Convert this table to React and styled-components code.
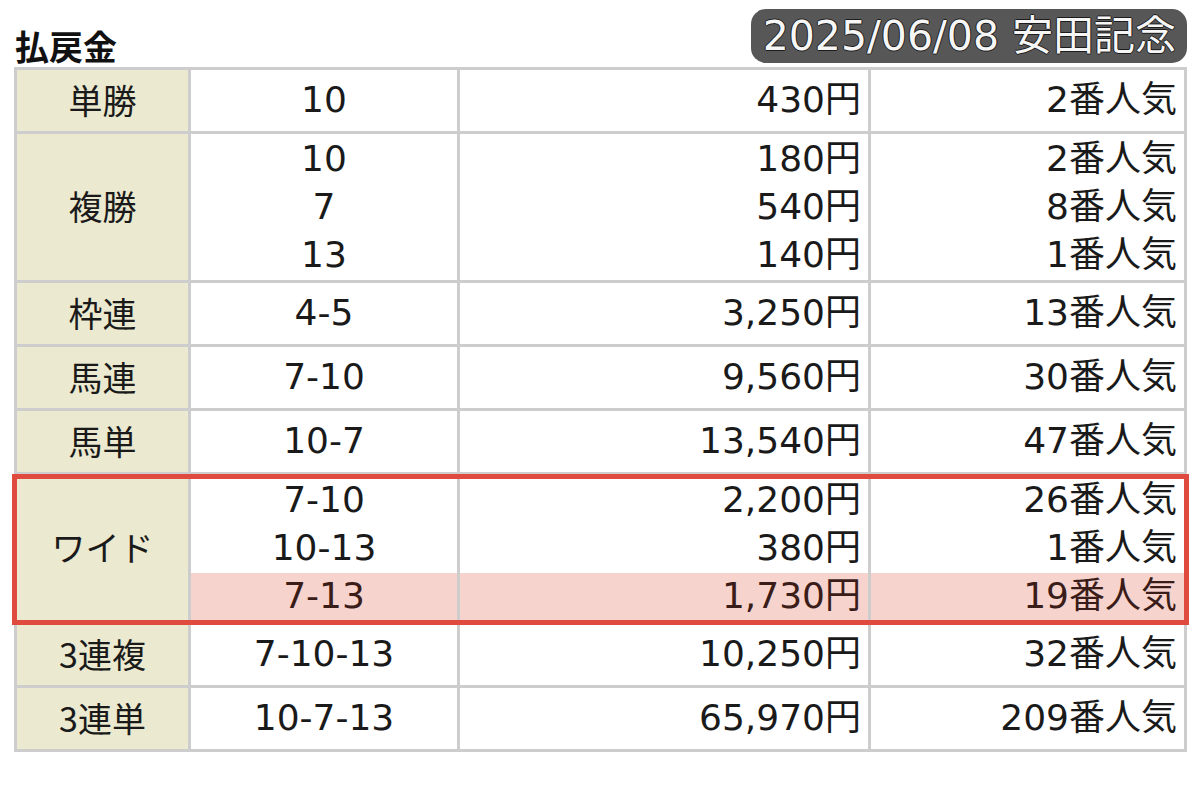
import React from 'react'
import styled, { createGlobalStyle } from 'styled-components'

const GlobalStyle = createGlobalStyle`
  html, body {
    margin: 0;
    padding: 0;
    background: #ffffff;
  }
  body {
    font-family: "DejaVu Sans", "Noto Sans CJK JP", sans-serif;
    color: #1a1a1a;
  }
`

const payouts = [
  { type: '単勝', lines: [['10', '430円', '2番人気']] },
  {
    type: '複勝',
    lines: [
      ['10', '180円', '2番人気'],
      ['7', '540円', '8番人気'],
      ['13', '140円', '1番人気'],
    ],
  },
  { type: '枠連', lines: [['4-5', '3,250円', '13番人気']] },
  { type: '馬連', lines: [['7-10', '9,560円', '30番人気']] },
  { type: '馬単', lines: [['10-7', '13,540円', '47番人気']] },
  {
    type: 'ワイド',
    marked: true,
    highlight: 2,
    lines: [
      ['7-10', '2,200円', '26番人気'],
      ['10-13', '380円', '1番人気'],
      ['7-13', '1,730円', '19番人気'],
    ],
  },
  { type: '3連複', lines: [['7-10-13', '10,250円', '32番人気']] },
  { type: '3連単', lines: [['10-7-13', '65,970円', '209番人気']] },
]

const Page = styled.main`
  width: 1200px;
  height: 800px;
  box-sizing: border-box;
  padding: 9px 13px 0 14px;
`

const Header = styled.header`
  display: flex;
  justify-content: space-between;
  align-items: flex-end;
  margin-bottom: 4px;
`

const Title = styled.h1`
  margin: 0 0 0 1px;
  font-family: "Noto Sans CJK JP", sans-serif;
  font-size: 34px;
  font-weight: 700;
  line-height: 1;
  color: #111;
`

const Badge = styled.div`
  height: 54px;
  box-sizing: border-box;
  padding: 0 11px 0 12px;
  display: flex;
  align-items: center;
  background: #575757;
  border-radius: 15px;
  color: #f6f6f6;
  font-size: 41px;
  line-height: 1;
  text-shadow: 1px 0 0 #1c1c1c, -1px 0 0 #1c1c1c, 0 1px 0 #1c1c1c,
    0 -1px 0 #1c1c1c;
`

const Table = styled.section`
  border: 3px solid #cdcdcd;
  background: #ffffff;
`

const Group = styled.div`
  position: relative;
  display: grid;
  grid-template-columns: 171px 269px 411px 1fr;
  grid-auto-rows: ${(p) => (p.$single ? '61px' : '48px')};
  padding-top: ${(p) => (p.$single ? '0' : '2px')};
  border-top: 3px solid #cdcdcd;
  &:first-child {
    border-top: none;
  }
  ${(p) =>
    p.$marked &&
    `
    z-index: 1;
    &::after {
      content: '';
      position: absolute;
      top: -1px;
      bottom: -4px;
      left: -5px;
      right: -5px;
      border: 5px solid #e04b3f;
      pointer-events: none;
    }
  `}
`

const Label = styled.div`
  grid-column: 1;
  grid-row: 1 / span ${(p) => p.$span};
  margin-top: ${(p) => (p.$span > 1 ? '-2px' : '0')};
  display: flex;
  align-items: center;
  justify-content: center;
  padding-bottom: 2px;
  background: #ebe9cf;
  font-family: "Noto Sans CJK JP", sans-serif;
  font-size: 34px;
  line-height: 1;
  color: #1a1a1a;
`

const Cell = styled.div`
  display: flex;
  align-items: center;
  justify-content: ${(p) => (p.$align === 'center' ? 'center' : 'flex-end')};
  padding-right: ${(p) => (p.$align === 'center' ? '0' : '7px')};
  border-left: 3px solid #cdcdcd;
  margin-top: ${(p) => (p.$first && p.$multi ? '-2px' : '0')};
  padding-top: ${(p) => (p.$first && p.$multi ? '2px' : '0')};
  padding-bottom: 2px;
  background: ${(p) => (p.$hl ? '#f7d3ce' : 'transparent')};
  color: ${(p) => (p.$hl ? '#3a1c18' : '#1a1a1a')};
  font-size: 36px;
  line-height: 1;
  white-space: nowrap;
`

const App = () => {
  return (
    <Page>
      <GlobalStyle />
      <Header>
        <Title>払戻金</Title>
        <Badge>2025/06/08 安田記念</Badge>
      </Header>
      <Table>
        {payouts.map((g) => {
          const single = g.lines.length === 1
          return (
            <Group key={g.type} $single={single} $marked={g.marked}>
              <Label $span={g.lines.length}>{g.type}</Label>
              {g.lines.map((line, i) => {
                const hl = g.highlight === i
                const shared = { $hl: hl, $first: i === 0, $multi: !single }
                return (
                  <React.Fragment key={i}>
                    <Cell $align="center" {...shared}>
                      {line[0]}
                    </Cell>
                    <Cell {...shared}>{line[1]}</Cell>
                    <Cell {...shared}>{line[2]}</Cell>
                  </React.Fragment>
                )
              })}
            </Group>
          )
        })}
      </Table>
    </Page>
  )
}

export default App
